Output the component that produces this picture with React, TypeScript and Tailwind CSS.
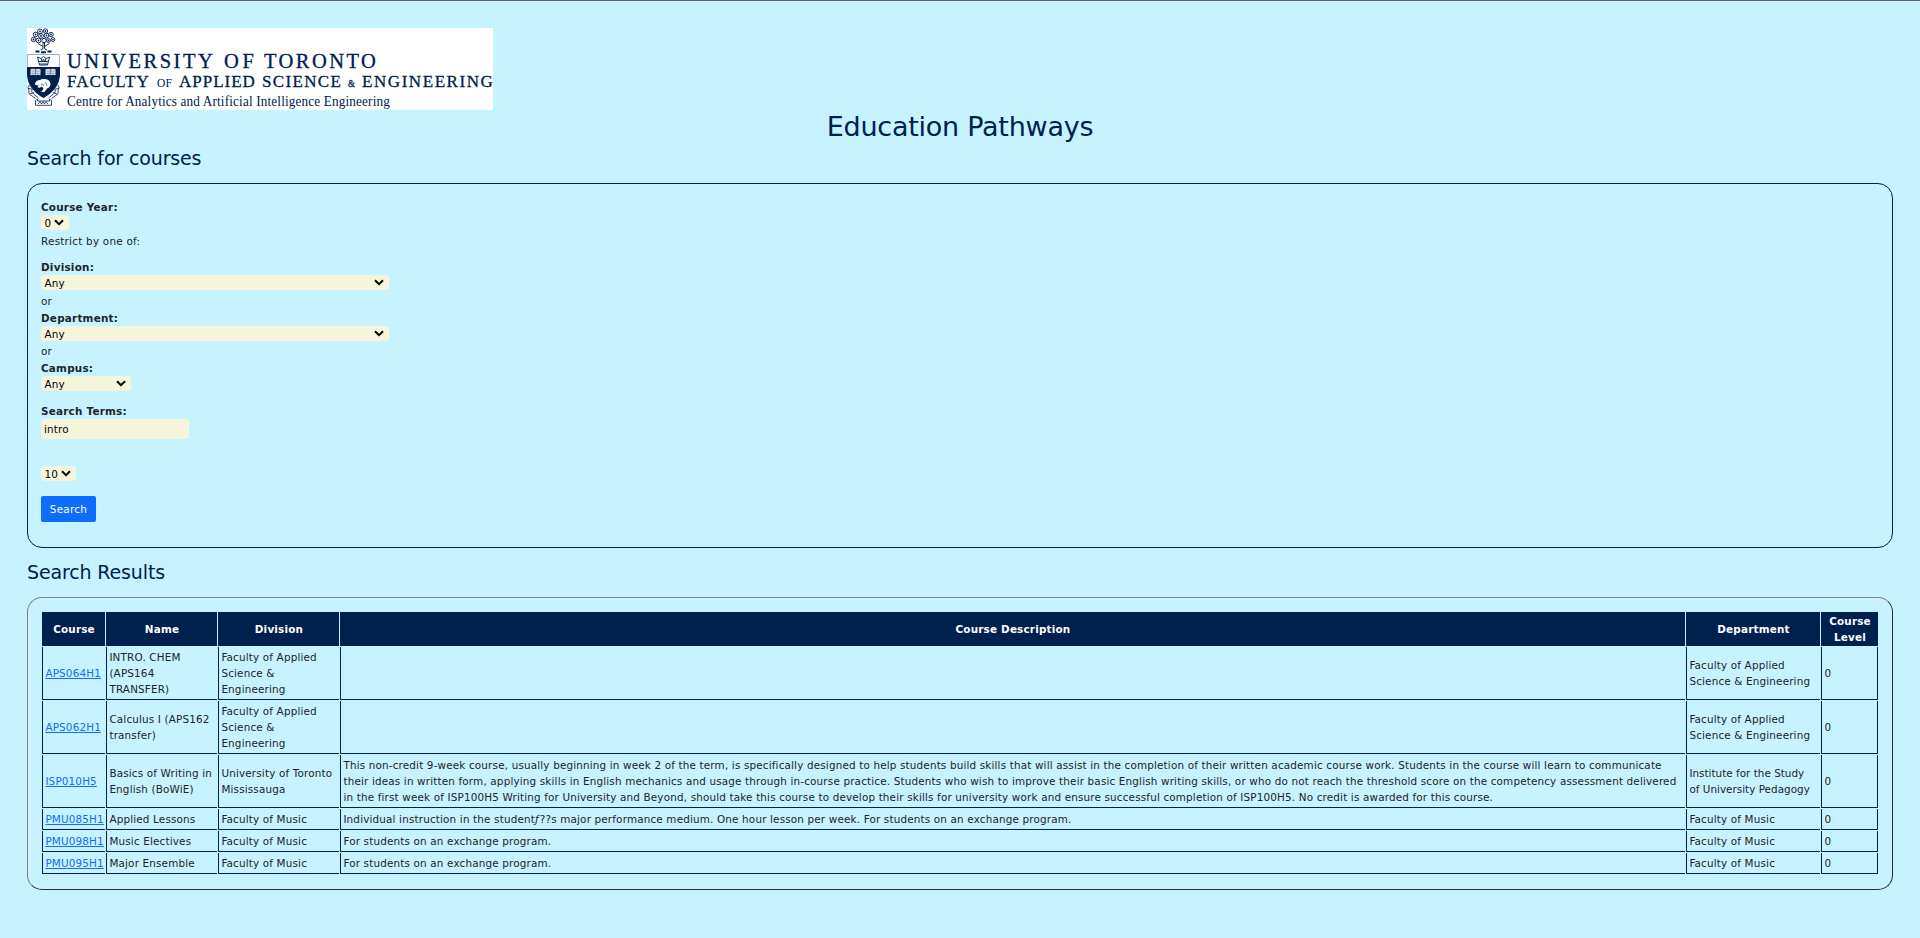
import React from "react";

const NAVY = "#00204e";

function Crest() {
  return (
    <g stroke={NAVY} fill="none" strokeWidth="0.8">
      <g strokeWidth="0.9">
        <circle cx="13" cy="3.400" r="2.400" />
        <circle cx="18.500" cy="3" r="2.200" />
        <circle cx="8.500" cy="6.500" r="2.300" />
        <circle cx="14" cy="8" r="2.400" />
        <circle cx="19.500" cy="7.500" r="2.300" />
        <circle cx="24" cy="6.500" r="2.200" />
        <circle cx="6.500" cy="11.500" r="2.200" />
        <circle cx="11.500" cy="12.500" r="2.400" />
        <circle cx="17" cy="12.500" r="2.200" />
        <circle cx="21.500" cy="12.500" r="2" />
        <circle cx="26" cy="11.500" r="1.900" />
        <g fill={NAVY} stroke="none">
          <circle cx="13" cy="3.400" r=".9" />
          <circle cx="18.500" cy="3" r=".9" />
          <circle cx="8.500" cy="6.500" r=".9" />
          <circle cx="14" cy="8" r=".9" />
          <circle cx="19.500" cy="7.500" r=".9" />
          <circle cx="24" cy="6.500" r=".9" />
          <circle cx="6.500" cy="11.500" r=".9" />
          <circle cx="11.500" cy="12.500" r=".9" />
          <circle cx="21.500" cy="12.500" r=".9" />
          <circle cx="26" cy="11.500" r=".8" />
        </g>
        <path d="M16 14.500v5.500q0 1.500-2.500 2M17.500 14.500v5.500q0 1.500 2.500 2M11 15.500l5 3M22.500 15.500l-5 3" />
      </g>
      <path d="M8.500 23.500h4M14 24.200h5M20.500 23.500h4" strokeWidth="2" />
      <path d="M.4 26.500h32V46q0 14-16 23Q.4 60 .4 46z" fill="#fff" stroke="#8b98b0" />
      <path d="M0 39h33v6q0 16-16.500 25Q0 61 0 45z" fill={NAVY} stroke="none" />
      <path d="M10.500 29l2 8h8l2-8-3.500 1.500-2.500-2-2.500 2zM12 33.500h9M14 30.500l1.200 3.500 1.300-3 1.300 3 1.200-3.500M12.500 36h8" strokeWidth=".9" />
      <path d="M3.500 41.200q3-1 5 0 2.500-1 5 0v6q-2.500-.8-5 0-2-.8-5 0zM18.500 41.200q3-1 5 0 2.500-1 5 0v6q-2.500-.8-5 0-2-.8-5 0z" fill="#dfe4ec" stroke="none" />
      <path d="M8.500 41v6M23.500 41v6M4.500 43h8M4.500 45.200h8M19.500 43h8M19.500 45.200h8" strokeWidth=".4" />
      <path d="M8 55.500q1-3.500 5-3.500 1.500-1.500 5-1 5 .500 5.500 5 0 3-3.500 4.500l-2.500 3.500h-3.500l2.500-3-1.500-2.500-2.500 1.500-2-1 1-1.500-3-.5z" fill="#fff" stroke="none" />
      <path d="M14 56l3 1.500M18.500 54.500l1.500 3" strokeWidth=".7" />
      <path d="M2.500 57q-3 2.500-.5 5.500-1 4 2.500 5l4 3M5 61q-1.500 3 1.500 5l5 4M30.500 57q3 2.500.5 5.500 1 4-2.500 5l-4 3M28 61q1.500 3-1.500 5l-5 4M1 60.500l4 .5M32 60.500l-4 .5M3 66l4-1.500M30 66l-4-1.500" />
      <path d="M8.500 72.500l2-1.500v2h12v-2l2 1.500v4.800h-16zM11 76l2-2.500 1.500 2.500 1.500-2.500 1.500 2.500 1.500-2.500 2 2.500" />
    </g>
  );
}

function Logo() {
  return (
    <svg width="466" height="82" viewBox="0 0 466 82" className="block bg-white" role="img" aria-label="University of Toronto">
      <Crest />
      <g fill={NAVY} fontFamily="'Liberation Serif', serif">
        <g stroke={NAVY} strokeWidth=".3">
          <text x="40" y="40" fontSize="20.500" textLength="146">UNIVERSITY</text>
          <text x="197" y="40" fontSize="20.500" textLength="30">OF</text>
          <text x="237" y="40" fontSize="20.500" textLength="112">TORONTO</text>
          <text x="40" y="59" fontSize="17" textLength="82">FACULTY</text>
          <text x="130" y="59" fontSize="11.500" textLength="15" strokeWidth="0">OF</text>
          <text x="152" y="59" fontSize="17" textLength="76">APPLIED</text>
          <text x="235" y="59" fontSize="17" textLength="79">SCIENCE</text>
          <text x="321" y="59" fontSize="10" textLength="7" lengthAdjust="spacingAndGlyphs">&amp;</text>
          <text x="335" y="59" fontSize="17" textLength="131">ENGINEERING</text>
        </g>
        <text x="40" y="78" fontSize="14" textLength="323" lengthAdjust="spacingAndGlyphs">Centre for Analytics and Artificial Intelligence Engineering</text>
      </g>
    </svg>
  );
}

function Select({ value, className }: { value: string; className: string }) {
  return (
    <div className={`flex h-[15px] items-center justify-between rounded-[3px] bg-[#f5f5dc] pl-[3.5px] pr-[5px] leading-[15px] text-black ${className}`}>
      <span className="pt-[2px]">{value}</span>
      <svg width="10" height="7" viewBox="0 0 10 7" className="-mt-px" fill="none" stroke="#000" strokeWidth="2">
        <path d="M1 1.200l4 4 4-4" />
      </svg>
    </div>
  );
}

function Label({ children, className = "" }: { children: React.ReactNode; className?: string }) {
  return <div className={`h-4 font-bold leading-4 tracking-[0.23px] ${className}`}>{children}</div>;
}

const HEADERS = ["Course", "Name", "Division", "Course Description", "Department", "Course\nLevel"];

const APPLIED = "Faculty of Applied\nScience &\nEngineering";
const APPLIED_DEPT = "Faculty of Applied\nScience & Engineering";

const ROWS: React.ReactNode[][] = [
  ["APS064H1", "INTRO. CHEM\n(APS164\nTRANSFER)", APPLIED, "", APPLIED_DEPT],
  ["APS062H1", "Calculus I (APS162\ntransfer)", APPLIED, "", APPLIED_DEPT],
  [
    "ISP010H5",
    "Basics of Writing in\nEnglish (BoWiE)",
    "University of Toronto\nMississauga",
    "This non-credit 9-week course, usually beginning in week 2 of the term, is specifically designed to help students build skills that will assist in the completion of their written academic course work. Students in the course will learn to communicate\ntheir ideas in written form, applying skills in English mechanics and usage through in-course practice. Students who wish to improve their basic English writing skills, or who do not reach the threshold score on the competency assessment delivered\nin the first week of ISP100H5 Writing for University and Beyond, should take this course to develop their skills for university work and ensure successful completion of ISP100H5. No credit is awarded for this course.",
    <span className="tracking-[0.02px]">{"Institute for the Study\nof University Pedagogy"}</span>,
  ],
  [
    "PMU085H1",
    "Applied Lessons",
    "Faculty of Music",
    <>Individual instruction in the student<i className="pr-px">ƒ</i>??s major performance medium. One hour lesson per week. For students on an exchange program.</>,
    "Faculty of Music",
  ],
  ["PMU098H1", "Music Electives", "Faculty of Music", "For students on an exchange program.", "Faculty of Music"],
  ["PMU095H1", "Major Ensemble", "Faculty of Music", "For students on an exchange program.", "Faculty of Music"],
];

const TD = "whitespace-pre border-b border-l border-[#00204e] py-[2px] pl-[2.4px] align-middle";

export default function App() {
  return (
    <div className="h-[938px] overflow-hidden border-t border-[#5f6368] bg-[#c7f2ff] px-[27px] pt-[27px] font-['DejaVu_Sans',sans-serif] text-[10.4px] leading-4 tracking-[0.165px] text-[#212529]">
      <Logo />
      <h1 className="h-[34px] text-center text-[27px] leading-[34px] tracking-[-0.25px] text-[#00204e]">Education Pathways</h1>
      <h2 className="h-[39px] text-[19px] leading-[28px] tracking-[-0.14px] text-[#00204e]">Search for courses</h2>

      <section className="flex h-[365px] flex-col items-start rounded-[15px] border border-[#00204e] px-[13px] pt-[15px]">
        <Label>Course Year:</Label>
        <Select value="0" className="w-7" />
        <div className="mt-[3px] tracking-[0.24px]">Restrict by one of:</div>
        <Label className="mt-[10px]">Division:</Label>
        <Select value="Any" className="w-[348px]" />
        <div className="mt-[3px]">or</div>
        <Label className="mt-px">Department:</Label>
        <Select value="Any" className="w-[348px]" />
        <div className="mt-[2px] h-4">or</div>
        <Label className="mt-px">Campus:</Label>
        <Select value="Any" className="w-[90px]" />
        <Label className="mt-[12px]">Search Terms:</Label>
        <div className="h-5 w-[148px] rounded-[3px] bg-[#f5f5dc] pl-[3px] leading-5 text-black">intro</div>
        <Select value="10" className="mt-[27px] w-[35px]" />
        <button className="mt-[15px] h-[26px] w-[55px] rounded-[2px] bg-[#0d6efd] tracking-[0.3px] text-white">Search</button>
      </section>

      <h2 className="h-[49px] pt-[10px] text-[19px] leading-[28px] tracking-[-0.14px] text-[#00204e]">Search Results</h2>

      <section className="h-[293px] rounded-[15px] border border-b-[#2b2b2b] border-l-[#808080] border-r-[#2b2b2b] border-t-[#808080] pl-[13px] pt-[13px]">
        <table className="w-[1838px] table-fixed border-separate border-spacing-[1px]">
          <colgroup>
            <col className="w-[63px]" />
            <col className="w-[111px]" />
            <col className="w-[121px]" />
            <col className="w-[1345px]" />
            <col className="w-[134px]" />
            <col className="w-[57px]" />
          </colgroup>
          <thead>
            <tr className="h-[34px] text-white">
              {HEADERS.map((h) => (
                <th key={h} className="whitespace-pre bg-[#00204e] p-0 pl-px text-center font-bold tracking-[0.2px]">{h}</th>
              ))}
            </tr>
          </thead>
          <tbody>
            {ROWS.map((r, i) => (
              <tr key={i} className={i < 3 ? "h-[53px]" : "h-[21px]"}>
                <td className={TD}>
                  <a href="#" className="text-[#0d6efd] underline">{r[0]}</a>
                </td>
                <td className={TD}>{r[1]}</td>
                <td className={TD}>{r[2]}</td>
                <td className={TD}>{r[3]}</td>
                <td className={TD}>{r[4]}</td>
                <td className={`${TD} border-r`}>0</td>
              </tr>
            ))}
          </tbody>
        </table>
      </section>
    </div>
  );
}
